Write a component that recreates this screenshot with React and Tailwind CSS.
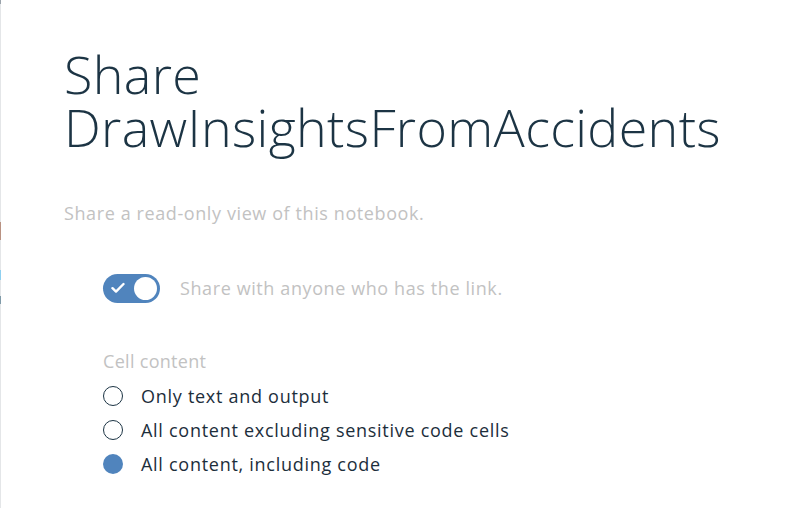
import React, { useState } from 'react';

const options = [
  'Only text and output',
  'All content excluding sensitive code cells',
  'All content, including code',
];

const App = () => {
  const [shared, setShared] = useState(true);
  const [choice, setChoice] = useState(2);

  return (
    <div className="relative w-[806px] h-[508px] bg-white overflow-hidden" style={{ fontFamily: '"Open Sans", "Noto Sans", sans-serif' }}>
      {/* edge of the page behind the modal */}
      <div className="absolute left-0 top-0 h-full w-[1px] bg-[#e4e6e8]">
        <div className="absolute top-0 h-[4px] w-full bg-[#9aa3ab]" />
        <div className="absolute top-[222px] h-[18px] w-full bg-[#b99282]" />
        <div className="absolute top-[270px] h-[10px] w-full bg-[#8fd0f0]" />
        <div className="absolute top-[296px] h-[8px] w-full bg-[#7f9aa8]" />
      </div>

      <div className="pl-[64px] pt-[47px]">
        <h1 className="w-[680px] text-[52px] leading-[53px] font-light text-[#1c3444] tracking-[0.35px]">
          Share DrawInsightsFromAccidents
        </h1>

        <p className="mt-[48px] text-[18px] leading-[24px] text-[#c2c2c2] tracking-[0.6px]">
          Share a read-only view of this notebook.
        </p>

        <div className="ml-[39px] mt-[49px] flex items-center gap-[20px]">
          <button
            onClick={() => setShared(!shared)}
            className={`relative w-[57px] h-[29px] rounded-full flex items-center ${shared ? 'bg-[#5084bd]' : 'bg-[#c6c6c6]'}`}
          >
            <svg className="absolute left-[8px] top-[8px]" width="14" height="12" viewBox="0 0 14 12">
              <path d="M1.5 6.2 L5 9.6 L12.5 2" fill="none" stroke="white" strokeWidth="2.4" strokeLinecap="round" strokeLinejoin="round" />
            </svg>
            <span className={`absolute top-[3px] w-[23px] h-[23px] rounded-full bg-white ${shared ? 'left-[31px]' : 'left-[3px]'}`} />
          </button>
          <span className="text-[18px] text-[#c2c2c2] tracking-[0.6px]">Share with anyone who has the link.</span>
        </div>

        <div className="ml-[39px] mt-[46px]">
          <div className="text-[18px] leading-[24px] text-[#c2c2c2] tracking-[0.3px]">Cell content</div>
          <div className="mt-[6px] flex flex-col">
            {options.map((label, i) => (
              <label key={label} className="flex items-center gap-[18px] h-[34px] cursor-pointer" onClick={() => setChoice(i)}>
                <span
                  className={`w-[20px] h-[20px] rounded-full ${choice === i ? 'bg-[#5084bd]' : 'border-[1.5px] border-[#1c3444]'}`}
                />
                <span className="text-[18px] text-[#1c2e3b] tracking-[0.72px]">{label}</span>
              </label>
            ))}
          </div>
        </div>
      </div>
    </div>
  );
};

export default App;
